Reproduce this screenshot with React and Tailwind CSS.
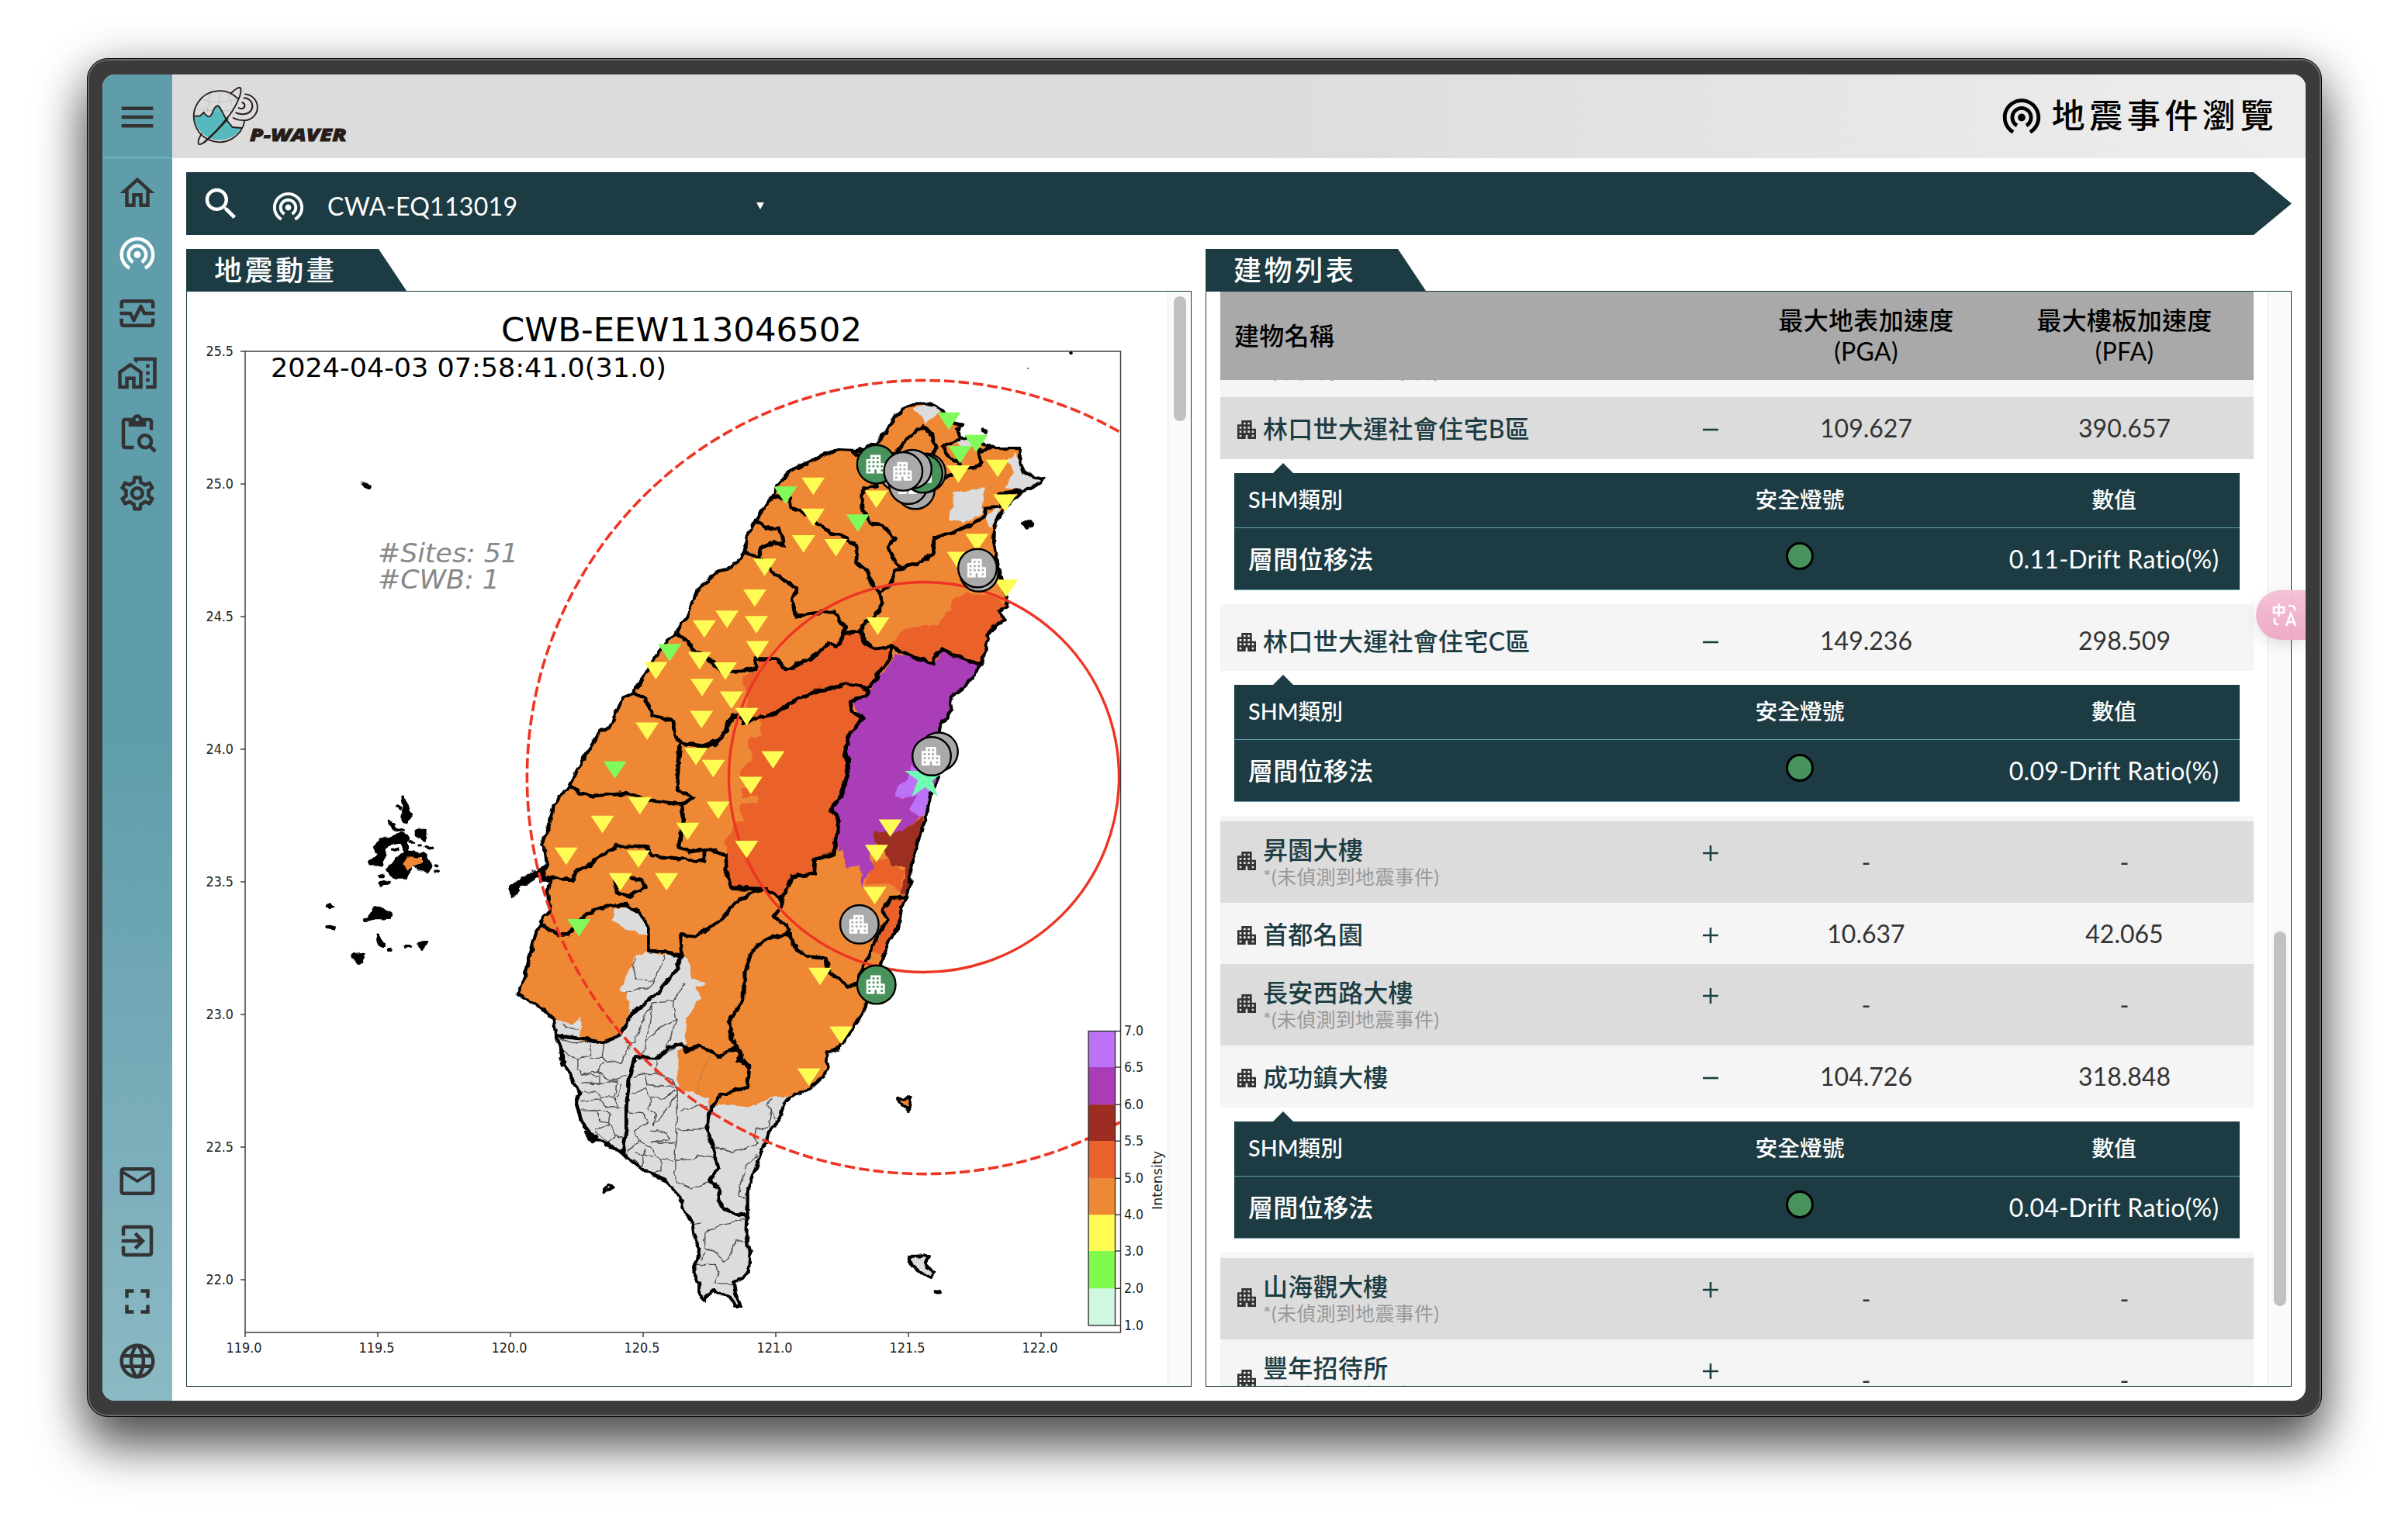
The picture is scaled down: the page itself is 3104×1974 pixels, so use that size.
import React from "react";
import {
  MdMenu, MdOutlineHome, MdWifiTethering, MdOutlineMonitorHeart, MdOutlineHomeWork,
  MdContentPasteSearch, MdOutlineSettings, MdMailOutline, MdExitToApp, MdFullscreen,
  MdLanguage, MdSearch, MdApartment,
} from "react-icons/md";

/* ---------- map geometry: each sheet has its own origin and scale ---------- */
const sheet = (ox, oy, sx, sy) => (str) =>
  str.trim().split(/\s+/).map((p) => {
    const [x, y] = p.split(",").map(Number);
    return `${(ox + x * sx).toFixed(1)},${(oy + y * sy).toFixed(1)}`;
  }).join(" ");
const N = sheet(900, 480, 1 / 2.8, 1 / 2.8);
const M = sheet(640, 800, 1 / 2.24, 1 / 2.8);
const S = sheet(640, 1150, 1 / 2.24, 1 / 2.8);
const W = sheet(230, 1000, 1 / 3, 1 / 2.01);

const tailCoast =
  S("850,740 830,765 815,825 790,860 775,910 745,1010 725,1080 725,1160 722,1240 732,1300 728,1365 710,1395 685,1410 690,1450 705,1495 690,1495 680,1470 655,1455 625,1440 612,1450 600,1475 585,1455 585,1410 567,1370 580,1330 585,1290 570,1240 565,1190 540,1150 530,1100 490,1045 430,1005 365,945 320,910 275,890 245,825 230,765 240,730 215,665 190,610 185,560 170,510");
const island =
  N("0,785 45,740 70,718 110,710 145,685 165,650 175,610 180,580 210,535 235,490 270,445 290,400 330,355 400,325 450,300 510,280 570,283 600,275 650,255 665,225 680,215 710,160 740,135 770,120 795,110 830,112 885,140 905,180 955,190 935,205 945,235 1005,250 1045,265 1070,275 1165,275 1160,315 1175,360 1210,378 1245,388 1215,408 1170,430 1120,475 1090,515 1070,560 1067,610 1080,680 1090,740 1105,790 1118,845 1085,865 1090,880 1105,895 1070,915 1045,950 1035,1010 1020,1055 1000,1095 960,1135 920,1165 910,1190 915,1220 875,1270 870,1300") + " " +
  M("1278,440 1275,560 1255,620 1245,680 1240,715 1225,760 1215,810 1205,860 1195,910 1195,950 1185,995 1170,1030 1160,1110 1135,1150 1115,1215 1110,1240 1090,1300 1068,1390 1050,1430 1030,1470") + " " +
  S("1000,545 985,568 955,578 950,600 960,635 945,665 905,710") + " " + tailCoast + " " +
  S("165,460 130,420 62,370 85,290 105,190 115,140 135,95") + " " +
  M("155,1050 150,980 155,940 130,940 145,880 140,820 130,810 150,750 165,665 210,595 240,530 270,460 300,400 330,380 365,280 395,262 430,190 470,110 520,40 545,0");

const redZones = [
  N("165,1100 205,1075 205,1035 280,1035 320,1070 360,1055 400,1030 440,1000 500,985 520,945 585,935 590,970 640,1000 700,990 700,1030 650,1090 610,1140 615,1160 550,1190 555,1225 595,1245 550,1300 530,1370 545,1400 540,1450 500,1560") + " " +
    M("1000,620 965,685 990,720 985,780 975,840 920,860 918,915 855,925 835,980 820,1000 780,970 680,965 660,900 668,850 660,800 680,755 690,725 715,720 700,690 710,660 755,660 755,630 705,640 710,605 750,600 740,570 705,570 705,540 740,500 725,440 735,420 765,415 760,360 715,350 725,280 710,200"),
  N("700,980 740,930 790,915 870,910 890,870 910,860 920,820 960,800 1060,805 1118,840 1085,870 1105,895 1070,915 1045,950 1035,1010 1020,1055 960,1035 880,1000 855,1050 780,1030 705,995"),
  M("1090,870 1130,855 1145,890 1180,900 1165,990 1150,960 1130,945 1065,955 1070,920"),
  M("1140,1000 1175,1000 1165,1110 1135,1150 1115,1205 1085,1200 1120,1110 1130,1075 1115,1050"),
];
const purpleZone =
  N("710,1015 780,1030 855,1055 880,1005 960,1040 1020,1055 1000,1095 960,1135 920,1165 910,1190 915,1220 875,1270 870,1300") + " " +
  M("1275,560 1250,620 1245,680 1225,710 1190,745 1150,775 1090,765 1095,800 1075,850 1090,890 1065,920 1055,970 1050,885 1010,898 1000,830 985,835 990,720 965,685 1000,620 1015,550 1005,480 1020,400 1055,350 1025,290 1075,260 1100,210 1140,150");
const violetZone = M("1195,520 1230,560 1270,600 1245,660 1240,700 1215,712 1190,680 1205,655 1215,630 1175,642 1150,635 1155,600 1190,570");
const darkZone = M("1235,705 1215,810 1195,910 1195,950 1185,990 1165,990 1180,930 1180,890 1145,890 1130,850 1090,800 1092,762 1150,770 1190,745");
const grayZones = [
  N("775,130 830,112 885,140 860,150 825,185"),
  N("1140,290 1165,330 1175,370 1245,388 1170,425 1110,415 1140,360 1120,320"),
  N("920,450 930,430 965,432 985,422 1035,418 1030,460 1022,510 985,530 955,545 940,535 905,533 908,500 920,480"),
  N("1030,520 1095,480 1070,555 1050,560"),
  N("930,255 965,235 1000,260 960,275"),
  M("340,1040 375,1035 410,1060 440,1120 430,1135 385,1120 335,1085"),
  tailCoast + " " + S("250,540 310,545 355,510 385,430 375,370 355,355 380,290 400,230 435,218 475,230 535,225 560,260 560,310 605,330 575,345 590,380 570,420 545,460 550,545 525,575 525,710 610,745 615,790 650,765 735,775 800,740"),
  S("170,460 205,465 215,480 245,450 240,525 175,515"),
];
const counties = [
  N("210,535 250,562 290,565 310,625 270,612 225,640 215,665 165,650"),
  N("270,450 330,455 335,490 400,515 430,545 480,580 530,595 575,630 570,685 610,715 630,775 655,795 690,770 710,715 740,710"),
  N("215,665 255,690 260,715 300,745 355,780 340,820 350,880 420,870 490,865 530,925 525,945 500,990 470,980 440,1010 390,1040 320,1075 280,1035 205,1035 205,1075 110,1080 60,1050 0,1010"),
  N("555,290 600,300 640,360 640,410 595,420 590,490 620,545 665,550 710,600 685,630 705,675 735,705 790,690 850,660 850,600 940,570 1030,525 1035,490 1090,485 1085,440 1165,425"),
  N("655,795 665,830 655,860 590,920 595,970 640,1000 700,990 780,1030 855,1055 850,1030 880,1000 960,1035 1020,1055"),
  N("525,945 585,935"),
  N("700,995 690,1040 650,1085 645,1110 610,1140 570,1130 530,1125 490,1140 430,1150 370,1175 310,1210 265,1240 200,1250 165,1270 150,1240 125,1240 105,1290 60,1345 0,1350"),
  N("610,1140 615,1160 550,1190 555,1225 595,1245 550,1300 530,1370 545,1400 540,1450 500,1560"),
  N("720,280 760,235 815,195 840,220 860,270 850,290"),
  N("940,245 885,265 900,300 945,330 940,350 1000,345 1020,330 1010,290 1050,270"),
  N("895,375 920,370"),
  M("520,40 575,110 620,150 650,180"),
  M("395,262 430,280 450,345 510,360 520,430 545,445 610,455 650,420 680,345 710,345"),
  M("530,450 520,610 565,640 535,665 450,650 375,625 280,635 240,622 215,600"),
  M("535,665 540,720 525,820 560,835 610,825 665,850 660,900 680,965 780,970 820,1000 835,980 855,925 918,915 920,860 975,840 990,720 965,685 1000,620 1015,550 1005,480"),
  M("130,930 220,935 230,905 270,880 345,815 430,815 450,850 530,860 600,870 600,830"),
  M("820,1000 825,1030 800,1070 845,1110 840,1130 780,1150 740,1190 715,1270 712,1370 670,1450 685,1530 705,1560 700,1590"),
  M("780,970 730,985 690,1020 640,1090 575,1140 530,1135 535,1210 490,1200 440,1195 440,1110 410,1050 375,1028 320,1030 260,1060 205,1135 180,1135 130,1100"),
  M("845,1130 865,1190 910,1215 950,1220 960,1270 1015,1320 1050,1310"),
  M("1185,1000 1140,1000 1115,1050 1130,1080 1100,1140 1080,1200 1055,1260 1050,1290"),
  M("535,1210 520,1260 460,1350 390,1420 355,1500 305,1525 250,1510 175,1500"),
  M("340,940 345,980 380,995 430,965 420,940 390,930"),
  S("400,595 465,600 500,560 535,550 550,575 590,552 635,595 690,565 705,580 708,610 730,630 725,705 645,735 615,800 608,860 625,920 640,995 615,1040 645,1080 640,1110 655,1145 720,1170"),
  S("400,595 385,660 375,770 375,850 365,945"),
];
const districts = [
  S("485,230 455,325 400,310 390,260 405,240"), S("455,325 440,350 405,350 370,365"),
  S("450,410 430,440 400,540 375,545"), S("450,400 510,395 520,460 485,480 430,540 425,590"), S("510,395 545,330"),
  S("450,400 440,490 430,545"), S("520,460 490,570"), S("195,470 200,490 235,500"),
  S("185,530 220,545 270,540 270,590 235,605 190,575"), S("270,540 310,550 305,600 270,600"),
  S("305,600 360,620 385,555"), S("235,605 235,640 250,660 290,650 310,610"), S("290,650 330,680 375,665"),
  S("250,660 300,665 300,695 245,690"), S("300,695 345,680 340,740 300,745 285,720 250,720"),
  S("245,755 300,750 320,780 375,780"), S("240,790 290,790 300,830 330,835"), S("270,790 300,785 330,800 325,840 285,860"),
  S("330,835 345,880 320,905 285,865"), S("345,880 370,890"), S("345,740 350,780"), S("360,690 350,740"),
  S("395,665 460,655 510,680 520,710"), S("430,665 435,700 480,700 515,705"), S("390,725 430,710 445,740 480,745 525,710"),
  S("445,740 440,780 460,800 455,845 520,730"), S("380,795 420,800 440,830 400,860"), S("400,860 410,900 375,940"),
  S("440,860 490,865 500,895 445,905"), S("410,900 455,930 460,960 510,970"), S("520,710 520,860 515,960 515,1050"),
  S("530,790 570,775 610,775"), S("525,860 605,855"), S("515,970 570,965 580,950 630,965"), S("515,1050 560,1070 615,1045"),
  S("455,905 515,905"), S("430,930 420,990"), S("475,960 475,1005 450,1015"), S("400,940 430,950 450,955"),
  S("630,920 685,940 755,910 740,890 750,855 785,850 790,790 780,765 800,745"), S("790,790 805,820"),
  S("755,950 720,990 705,1050 700,1095 720,1110"), S("570,1200 590,1195"), S("720,1180 640,1205 602,1230 602,1290 640,1300 655,1340 670,1320 690,1260 715,1260"),
  S("575,1345 630,1345 645,1370 630,1410 685,1420"), S("600,1300 590,1330"), S("465,600 520,560"), S("460,655 465,610"),
];
const faintDistricts = [S("618,600 590,650 580,720")];
const isles = [
  N("1027,205 1038,207 1037,219 1026,217"), N("1170,545 1190,535 1207,550 1190,560"),
  M("145,880 100,915 40,960 50,1000 62,965 130,915"),
  S("255,870 290,885 280,905"), S("185,600 190,625 200,615"),
];
const penghu = [
  W("865,55 888,80 900,103 880,120 865,110 872,85"), W("815,118 838,126 830,134"), W("845,78 858,86"),
  W("920,140 950,138 948,165 920,155"), W("735,228 775,205 765,185 785,165 820,160 860,150 885,158 885,195 920,200 955,205 975,235 965,248 900,230 880,265 840,265 805,245 845,215 880,200 860,170 820,178 795,190 790,228"),
  W("780,262 792,262"), W("778,280 815,275 785,285"), W("898,170 910,172"), W("930,182 936,182"), W("955,185 985,190"),
  W("930,242 936,242"), W("995,232 1003,234"), W("996,248 1005,248"), W("575,338 588,332 598,340 586,344"), W("577,392 603,397"),
  W("725,374 738,373 755,345 785,347 820,362 815,370 770,368"), W("768,415 792,438 778,438"), W("815,450 822,450"),
  W("878,444 898,444"), W("928,435 958,434 944,448"), W("676,466 716,464 710,480 692,488 684,476"), W("835,138 870,142"), W("830,195 848,190"),
];

const yellow = [
  ...[[415,380],[415,492],[380,588],[497,602],[240,673],[204,784],[104,860],[210,880],[22,895],[214,970],[5,1010],[98,1047],[14,1107],[120,1152],[12,1222],[175,1212],[643,427],[939,336],[1081,316],[1107,441],[1006,583],[939,648],[1112,748],[648,885],[270,1368],[190,1460]].map(([x, y]) => [900 + x / 2.8, 480 + y / 2.8]),
  ...[[460,150],[435,368],[576,460],[626,503],[640,654],[414,638],[306,705],[552,730],[722,795],[201,820],[410,830],[358,912],[491,912],[1137,718],[1097,810],[1092,962],[934,1254],[995,1466],[902,1617]].map(([x, y]) => [640 + x / 2.24, 800 + y / 2.8]),
];
const green = [
  ...[[905,145],[1003,226],[945,266],[315,412],[576,513]].map(([x, y]) => [900 + x / 2.8, 480 + y / 2.8]),
  ...[[500,85],[342,508],[238,1078]].map(([x, y]) => [640 + x / 2.24, 800 + y / 2.8]),
];
const pins = [
  [1158, 608, "#aaaaaa", false], [1129.6, 598.6, "#47935b", true], [1180, 631.5, "#aaaaaa", false], [1171, 625, "#aaaaaa", true],
  [1194, 609.5, "#aaaaaa", false], [1190, 610.5, "#47935b", true], [1176, 604.8, "#aaaaaa", false], [1164.3, 607.8, "#aaaaaa", true],
  [1262, 738, "#aaaaaa", false], [1260, 732.5, "#aaaaaa", true],
  [1210, 969.3, "#aaaaaa", false], [1201, 975, "#aaaaaa", true],
  [1107.8, 1191.8, "#aaaaaa", true], [1129.7, 1269.6, "#47935b", true],
];
const scale = [
  ["7.0", 1329.5, "#bd71f7"], ["6.5", 1376, "#aa3cb8"], ["6.0", 1424.3, "#9c2d20"], ["5.5", 1471.2, "#ea622c"],
  ["5.0", 1519.3, "#ee8834"], ["4.0", 1566.3, "#fffd54"], ["3.0", 1613, "#80fb4c"], ["2.0", 1661.3, "#d0f7e2"], ["1.0", 1709, null],
];
const tri = ([x, y]) => `M${x - 15},${y}H${x + 15}L${x},${y + 22.5}Z`;

function QuakeMap() {
  return (
    <svg viewBox="241 376 1264 1411" className="block h-[1411px] w-[1264px]" fontFamily="'DejaVu Sans', sans-serif">
      <defs>
        <clipPath id="axes"><rect x="316" y="453" width="1129" height="1265" /></clipPath>
        <filter id="rough" filterUnits="userSpaceOnUse" x="241" y="376" width="1264" height="1411">
          <feTurbulence type="fractalNoise" baseFrequency="0.09" numOctaves="2" seed="4" result="n" />
          <feDisplacementMap in="SourceGraphic" in2="n" scale="7" xChannelSelector="R" yChannelSelector="G" />
        </filter>
      </defs>
      <g filter="url(#rough)">
        <polygon points={island} fill="#ee8834" />
        {redZones.map((p, i) => <polygon key={i} points={p} fill="#ea622c" />)}
        <polygon points={purpleZone} fill="#aa3cb8" />
        <polygon points={violetZone} fill="#bd71f7" />
        <polygon points={darkZone} fill="#9c2d20" />
        {grayZones.map((p, i) => <polygon key={i} points={p} fill="#dcdcdc" />)}
        <g fill="none" stroke="#4a4a4a" strokeWidth="1.3">{districts.map((p, i) => <polyline key={i} points={p} />)}</g>
        <g fill="none" stroke="#b5793f" strokeWidth="1">{faintDistricts.map((p, i) => <polyline key={i} points={p} />)}</g>
        <g fill="none" stroke="#000" strokeWidth="4.8" strokeLinejoin="round" strokeLinecap="round">
          <polygon points={island} strokeWidth="4.2" />
          {counties.map((p, i) => <polyline key={i} points={p} />)}
        </g>
        <g fill="#000" stroke="#000" strokeWidth="4" strokeLinejoin="round" strokeLinecap="round">
          {isles.map((p, i) => <polygon key={i} points={p} />)}
          {penghu.map((p, i) => <polygon key={i} points={p} />)}
          <polygon points={S("310,1085 312,1070 328,1054 338,1065")} fill="#dcdcdc" />
          <polygon points="1158,1417 1174,1416 1171,1431 1163,1426" fill="#ee8834" />
          <polygon points="1171,1620 1198,1619 1193,1632 1205,1640 1200,1648 1190,1642 1176,1632" fill="#dcdcdc" />
          <path d="M1208,1666l2,0M469,624l6,3" strokeWidth="7" />
          <path d="M1380,455l1,2" />
        </g>
        <polygon points={W("865,232 885,212 945,212 945,225 885,242")} fill="#ee8834" />
        <path d="M1323,476h2" stroke="#777" strokeWidth="2" />
      </g>
      <g clipPath="url(#axes)" fill="none" stroke="#ee3524">
        <circle cx="1191" cy="1002" r="251.5" strokeWidth="3.4" />
        <circle cx="1191" cy="1002" r="511.6" strokeWidth="3.6" strokeDasharray="13.6 5" />
      </g>
      <path d={yellow.map(tri).join("")} fill="#fffd54" />
      <path d={green.map(tri).join("")} fill="#80fb5a" />
      <path d="M1192,973L1198,994L1217,994L1202,1007L1209,1027L1192.500,1015L1175.500,1027L1183,1006L1166,994L1186,994Z" fill="#71fcb3" />
      <rect x="316" y="453" width="1128.500" height="1265" fill="none" stroke="#333" strokeWidth="1.400" />
      {["25.5", "25.0", "24.5", "24.0", "23.5", "23.0", "22.5", "22.0"].map((t, i) => (
        <g key={t}>
          <path d={`M310,${453 + i * 171}h6`} stroke="#333" strokeWidth="1.400" />
          <text x="265.500" y={459 + i * 171} fontSize="17" fill="#222" textLength="35.500" lengthAdjust="spacingAndGlyphs">{t}</text>
        </g>
      ))}
      {["119.0", "119.5", "120.0", "120.5", "121.0", "121.5", "122.0"].map((t, i) => (
        <g key={t}>
          <path d={`M${316 + i * 171},1718v6`} stroke="#333" strokeWidth="1.400" />
          <text x={291.5 + i * 171} y="1743.500" fontSize="17" fill="#222" textLength="46" lengthAdjust="spacingAndGlyphs">{t}</text>
        </g>
      ))}
      {scale.map(([t, y, c], i) => (
        <g key={t}>
          {c && <rect x="1403" y={y} width="34.500" height={scale[i + 1][1] - y + 0.5} fill={c} />}
          <path d={`M1437,${y}h7`} stroke="#333" strokeWidth="1.400" />
          <text x="1449" y={y + 5.5} fontSize="17" fill="#222" textLength="25" lengthAdjust="spacingAndGlyphs">{t}</text>
        </g>
      ))}
      <rect x="1403" y="1329.500" width="34.500" height="379.500" fill="none" stroke="#333" strokeWidth="1.400" />
      <text transform="translate(1497.500 1560) rotate(-90)" fontSize="18" fill="#222" textLength="76" lengthAdjust="spacingAndGlyphs">Intensity</text>
      <text x="646" y="440" fontSize="42" fill="#000" textLength="465" lengthAdjust="spacingAndGlyphs">CWB-EEW113046502</text>
      <text x="349" y="486" fontSize="34" fill="#000" textLength="510" lengthAdjust="spacingAndGlyphs">2024-04-03 07:58:41.0(31.0)</text>
      <g fontSize="34" fill="#888" fontStyle="italic">
        <text x="487" y="725" textLength="181" lengthAdjust="spacingAndGlyphs">#Sites: 51</text>
        <text x="487" y="759" textLength="157" lengthAdjust="spacingAndGlyphs">#CWB: 1</text>
      </g>
      {pins.map(([x, y, c, icon], i) => (
        <g key={i}>
          <circle cx={x} cy={y} r="24.800" fill={c} stroke="#000" strokeWidth="2.400" />
          {icon && <MdApartment x={x - 17} y={y - 16} size={32} color="#fff" />}
        </g>
      ))}
    </svg>
  );
}

function Logo() {
  return (
    <svg viewBox="0 0 660 276" className="ml-[18px] h-[92px] w-[220px]">
      <path d="M31,137H53L68,123L88,142C96,138 104,116 109,107Q121,88 132,107L155,150L179,180L214,183A99,99 0 0 1 31,137Z" fill="#55b9bd" />
      <path d="M60,73Q125,92 196,72M42,108Q125,125 180,112M128,38Q136,75 122,95M98,45Q84,75 82,125M160,45Q172,75 176,95" fill="none" stroke="#b5b5b5" strokeWidth="2" />
      <g fill="none" stroke="#261c18" strokeWidth="5.500" strokeLinecap="round">
        <path d="M198,68A99,99 0 1 0 226,155M31,137H53L68,123Q86,148 96,134C104,120 104,116 109,107Q121,88 132,107L155,150L179,180L214,183" />
        <path d="M174,48C190,32 206,22 211,30C216,50 190,110 152,152C110,205 62,252 49,246C42,238 52,216 60,206" />
        <path d="M160,148Q110,205 70,238" strokeWidth="7" />
        <path d="M228,52A51,51 0 0 1 234,153Q205,156 182,144" />
        <path d="M224,67A31,31 0 0 1 226,129Q208,132 193,124" strokeWidth="6" />
        <path d="M217,85A13,12 0 0 1 217,108Q209,109 203,105" strokeWidth="6" />
      </g>
      <text x="246" y="233" fontFamily="'Open Sans', sans-serif" fontWeight="800" fontStyle="italic" fontSize="70" fill="#261c18" stroke="#261c18" strokeWidth="2.500" textLength="374" lengthAdjust="spacingAndGlyphs">P-WAVER</text>
    </svg>
  );
}

const NavItem = ({ icon: Icon, active }) => (
  <li className={active ? "flex h-[77.5px] items-center justify-center text-white" : "flex h-[77.5px] items-center justify-center text-[#333333]"}>
    <Icon className="size-[54px]" />
  </li>
);

const PanelTab = ({ children }) => (
  <h2 className="flex h-[54px] w-[284px] items-center bg-[#1c3b43] pl-9 text-[36px] font-medium leading-none tracking-[3.6px] text-white [clip-path:polygon(0_0,248px_0,100%_100%,0_100%)]">
    {children}
  </h2>
);

function BuildingRow({ name, undetected, open, pga = "-", pfa = "-", tone, height }) {
  return (
    <div className={`grid grid-cols-[613px_53px_1fr_1fr] text-[32px] leading-[40px] ${tone} ${height}`}>
      <div className={undetected ? "flex pl-[18px] pt-[17px]" : "flex pl-[18px] pt-[21px]"}>
        <MdApartment className={undetected ? "mt-[18px] size-8 shrink-0 text-[#333333]" : "mt-[5px] size-8 shrink-0 text-[#333333]"} />
        <div className="ml-[5px] font-medium tracking-[0.3px] text-[#1c3c43]">
          {name}
          {undetected && <div className="-mt-[4px] text-[25px] font-normal leading-9 text-[#999999]">*(未偵測到地震事件)</div>}
        </div>
      </div>
      <div className="pl-[8.5px] pt-[21px]">
        <svg viewBox="0 0 20 20" className={undetected ? "mt-[10px] size-5" : "mt-[11px] size-5"} fill="none" stroke="#1c3c43" strokeWidth="2.600">
          <path d={open ? "M0 10H20" : "M0 10H20M10 0V20"} />
        </svg>
      </div>
      <div className={undetected ? "pt-[33px] text-center text-[#333333]" : "pt-5 text-center text-[#333333]"}>{pga}</div>
      <div className={undetected ? "pt-[33px] text-center text-[#333333]" : "pt-5 text-center text-[#333333]"}>{pfa}</div>
    </div>
  );
}

function ShmDetail({ value }) {
  return (
    <div className="flex h-[194px] flex-col bg-[#f5f5f5]">
      <div className="h-[187px] bg-white px-[18px]">
        <div className="flex h-[18px] items-end pl-[50px]">
          <div className="h-[13px] w-[26px] bg-[#1c3b43] [clip-path:polygon(50%_0,100%_100%,0_100%)]" />
        </div>
        <div className="h-[151px] border-b border-[#5f9dab] bg-[#1c3b43] text-[32px] text-white">
          <div className="grid h-[71px] grid-cols-[486px_486px_1fr] items-center border-b border-[#5f9dab] text-[28.8px] font-medium">
            <div className="pl-[18px]">SHM類別</div>
            <div className="text-center">安全燈號</div>
            <div className="text-center">數值</div>
          </div>
          <div className="grid h-[79px] grid-cols-[486px_486px_1fr] items-center">
            <div className="pl-[18px] pt-px font-medium tracking-[0.3px]">層間位移法</div>
            <div className="flex justify-center pb-[8px]"><span className="size-9 rounded-full border-[3px] border-black bg-[#47935b]" /></div>
            <div className="text-center tracking-[0.3px]">{value}</div>
          </div>
        </div>
      </div>
    </div>
  );
}

export default function App() {
  return (
    <div className="flex h-[1974px] w-[3104px] overflow-hidden bg-white pl-28 pt-[75px] font-[Lato,'Noto_Sans_CJK_TC',sans-serif]">
      <div className="h-[1752px] w-[2881px] shrink-0 rounded-[27px] border border-black bg-[#3b3b3b] p-[20px] pl-[19px] shadow-[inset_0_0_0_2px_#686b69,0_38px_64px_rgba(0,0,0,0.62),0_8px_60px_rgba(0,0,0,0.26)]">
        <div className="relative flex h-[1710px] w-[2840px] overflow-hidden rounded-[16px] bg-white">
          <nav className="flex w-[90px] shrink-0 flex-col bg-linear-to-b from-[#5f9dab] from-50% to-[#8bb9c4]">
            <div className="flex h-[108px] items-center justify-center border-b border-[#7ec3d1] pt-[3px] text-[#333333]">
              <MdMenu className="size-[54px]" />
            </div>
            <ul className="flex flex-1 flex-col pb-3 pt-[6px]">
              <NavItem icon={MdOutlineHome} />
              <NavItem icon={MdWifiTethering} active />
              <NavItem icon={MdOutlineMonitorHeart} />
              <NavItem icon={MdOutlineHomeWork} />
              <NavItem icon={MdContentPasteSearch} />
              <NavItem icon={MdOutlineSettings} />
              <li className="flex-1" />
              <NavItem icon={MdMailOutline} />
              <NavItem icon={MdExitToApp} />
              <NavItem icon={MdFullscreen} />
              <NavItem icon={MdLanguage} />
            </ul>
          </nav>

          <div className="flex min-w-0 flex-1 flex-col">
            <header className="flex h-[108px] shrink-0 items-center justify-between bg-linear-to-r from-[#dcdcdc] from-50% to-[#eeeeee] pr-[36px]">
              <Logo />
              <h1 className="flex items-center pb-[3px] text-[43.2px] font-medium leading-none tracking-[5.4px] text-black">
                <MdWifiTethering className="mr-[9px] size-[58px]" />
                地震事件瀏覽
              </h1>
            </header>

            <main className="flex flex-1 flex-col gap-[18px] p-[18px]">
              <div className="flex h-[81px] w-[2714px] items-center bg-[#1c3b43] pl-[18px] text-white [clip-path:polygon(0_0,2665px_0,100%_50%,2665px_100%,0_100%)]">
                <MdSearch className="size-[54px]" />
                <MdWifiTethering className="ml-[36px] mt-[6px] size-[47px]" />
                <span className="ml-[27px] mt-[7px] w-[553px] text-[32px] leading-10 tracking-[0.3px]">CWA-EQ113019</span>
                <svg viewBox="0 0 10 9" className="mt-[5px] h-[9px] w-[10px] fill-white"><path d="M0 0H10L5 9Z" /></svg>
              </div>

              <div className="flex flex-1 gap-[18px]">
                <section className="flex w-[1296px] flex-col">
                  <PanelTab>地震動畫</PanelTab>
                  <div className="flex h-[1413px] overflow-hidden border border-[#1c3b43]">
                    <QuakeMap />
                    <div className="flex flex-1 justify-center border-l border-[#e6e6e6] bg-[#fafafa] pt-[6px]">
                      <div className="h-[161px] w-4 rounded-full bg-[#c1c1c1]" />
                    </div>
                  </div>
                </section>

                <section className="flex w-[1400px] flex-col">
                  <PanelTab>建物列表</PanelTab>
                  <div className="flex h-[1413px] overflow-hidden border border-[#1c3b43]">
                    <div className="flex w-[1368px] flex-col px-[18px]">
                      <div className="grid h-[114px] shrink-0 grid-cols-4 items-center bg-[#a9a9a9] text-[32px] font-medium leading-10 tracking-[0.3px] text-black">
                        <div className="col-span-2 pl-[18px]">建物名稱</div>
                        <div className="text-center">最大地表加速度<br /><span className="font-normal">(PGA)</span></div>
                        <div className="text-center">最大樓板加速度<br /><span className="font-normal">(PFA)</span></div>
                      </div>
                      <div className="min-h-0 flex-1 overflow-hidden">
                        <div className="-mt-[83px]">
                          <BuildingRow name="林口世大運社會住宅A區" undetected tone="bg-[#f5f5f5]" height="h-[105px]" />
                          <BuildingRow name="林口世大運社會住宅B區" open pga="109.627" pfa="390.657" tone="bg-[#dcdcdc]" height="h-[80px]" />
                          <ShmDetail value="0.11-Drift Ratio(%)" />
                          <BuildingRow name="林口世大運社會住宅C區" open pga="149.236" pfa="298.509" tone="bg-[#f5f5f5]" height="h-[79px]" />
                          <ShmDetail value="0.09-Drift Ratio(%)" />
                          <BuildingRow name="昇園大樓" undetected tone="bg-[#dcdcdc]" height="h-[105px]" />
                          <BuildingRow name="首都名園" pga="10.637" pfa="42.065" tone="bg-[#f5f5f5]" height="h-[79px]" />
                          <BuildingRow name="長安西路大樓" undetected tone="bg-[#dcdcdc]" height="h-[105px]" />
                          <BuildingRow name="成功鎮大樓" open pga="104.726" pfa="318.848" tone="bg-[#f5f5f5]" height="h-[80px]" />
                          <ShmDetail value="0.04-Drift Ratio(%)" />
                          <BuildingRow name="山海觀大樓" undetected tone="bg-[#dcdcdc]" height="h-[105px]" />
                          <BuildingRow name="豐年招待所" undetected tone="bg-[#f5f5f5]" height="h-[105px]" />
                        </div>
                      </div>
                    </div>
                    <div className="flex flex-1 justify-center border-l border-[#e6e6e6] bg-[#fafafa] pt-[825px]">
                      <div className="h-[483px] w-4 rounded-full bg-[#c1c1c1]" />
                    </div>
                  </div>
                </section>
              </div>
            </main>
          </div>

          <button className="absolute right-0 top-[665px] flex h-16 w-[64px] items-center rounded-l-full bg-linear-to-b from-[#f4bfd6] to-[#eea6c4] pl-[21px] opacity-95 shadow-[0_6px_20px_rgba(0,0,0,0.12)]">
            <svg viewBox="0 0 32 30" className="h-[30px] w-8" fill="none" stroke="#fff" strokeWidth="2.600">
              <path d="M2 5H15V12H2ZM8.500 0V17M3 19V24Q3 27 8 27M21 3H25Q29 3 29 9" />
              <path d="M18 29L24 13L30 29M20 24H28" />
            </svg>
          </button>
        </div>
      </div>
    </div>
  );
}
